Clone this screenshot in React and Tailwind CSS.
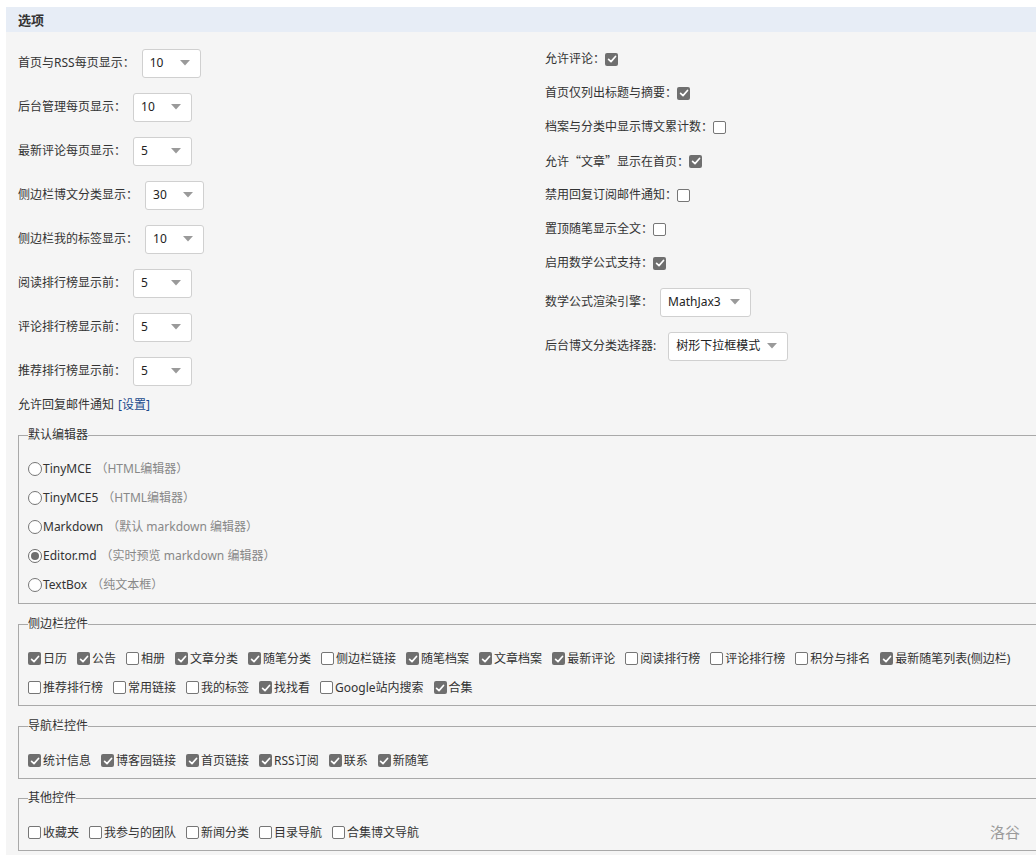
import React from 'react';

const leftSelects = [
  { label: '首页与RSS每页显示：', value: '10' },
  { label: '后台管理每页显示：', value: '10' },
  { label: '最新评论每页显示：', value: '5' },
  { label: '侧边栏博文分类显示：', value: '30' },
  { label: '侧边栏我的标签显示：', value: '10' },
  { label: '阅读排行榜显示前：', value: '5' },
  { label: '评论排行榜显示前：', value: '5' },
  { label: '推荐排行榜显示前：', value: '5' },
];

const rightChecks = [
  { key: 'a', label: '允许评论：', on: true },
  { key: 'b', label: '首页仅列出标题与摘要：', on: true },
  { key: 'c', label: '档案与分类中显示博文累计数：', on: false },
  {
    key: 'd',
    label: (
      <>
        允许<span className="font-['Noto_Sans_CJK_SC',sans-serif]">“文章”</span>显示在首页：
      </>
    ),
    on: true,
  },
  { key: 'e', label: '禁用回复订阅邮件通知：', on: false },
  { key: 'f', label: '置顶随笔显示全文：', on: false },
  { key: 'g', label: '启用数学公式支持：', on: true },
];

const editors = [
  { name: 'TinyMCE', note: '（HTML编辑器）' },
  { name: 'TinyMCE5', note: '（HTML编辑器）' },
  { name: 'Markdown', note: '（默认 markdown 编辑器）' },
  { name: 'Editor.md', note: '（实时预览 markdown 编辑器）', on: true },
  { name: 'TextBox', note: '（纯文本框）' },
];

const sidebarRows = [
  [
    ['日历', 1], ['公告', 1], ['相册', 0], ['文章分类', 1], ['随笔分类', 1], ['侧边栏链接', 0],
    ['随笔档案', 1], ['文章档案', 1], ['最新评论', 1], ['阅读排行榜', 0], ['评论排行榜', 0],
    ['积分与排名', 0], ['最新随笔列表(侧边栏)', 1],
  ],
  [['推荐排行榜', 0], ['常用链接', 0], ['我的标签', 0], ['找找看', 1], ['Google站内搜索', 0], ['合集', 1]],
];

const navItems = [['统计信息', 1], ['博客园链接', 1], ['首页链接', 1], ['RSS订阅', 1], ['联系', 1], ['新随笔', 1]];
const otherItems = [['收藏夹', 0], ['我参与的团队', 0], ['新闻分类', 0], ['目录导航', 0], ['合集博文导航', 0]];

function Box({ on }) {
  if (on) {
    return (
      <span className="inline-flex h-[13px] w-[13px] shrink-0 items-center justify-center rounded-[2px] bg-[#6f6f6f]">
        <svg viewBox="0 0 10 10" className="h-[10px] w-[10px]">
          <path d="M1.6 5.3 L4 7.6 L8.5 2.5" stroke="#fff" strokeWidth="1.7" fill="none" strokeLinecap="round" strokeLinejoin="round" />
        </svg>
      </span>
    );
  }
  return <span className="inline-block h-[13px] w-[13px] shrink-0 rounded-[2px] border border-[#767676] bg-white" />;
}

function Radio({ on }) {
  return (
    <span className={`inline-flex h-[14px] w-[14px] shrink-0 items-center justify-center rounded-full border bg-white ${on ? 'border-[#6f6f6f]' : 'border-[#767676]'}`}>
      {on && <span className="h-[8px] w-[8px] rounded-full bg-[#6f6f6f]" />}
    </span>
  );
}

function Select({ value, width }) {
  return (
    <div className={`flex h-[29px] items-center justify-between rounded-[3px] border border-[#d0d0d0] bg-white pl-[7px] pr-[10px] text-[#222] ${width}`}>
      <span>{value}</span>
      <svg viewBox="0 0 10 6" className="h-[6px] w-[10px]">
        <polygon points="0,0 10,0 5,5.5" fill="#9a9a9a" />
      </svg>
    </div>
  );
}

function CheckRow({ items }) {
  return (
    <div className="flex h-[29px] items-center gap-x-[10px]">
      {items.map(([label, on]) => (
        <label key={label} className="flex items-center whitespace-nowrap">
          <Box on={on} />
          <span className="ml-[2px]">{label}</span>
        </label>
      ))}
    </div>
  );
}

function Group({ title, children, className = '' }) {
  return (
    <fieldset className={`border border-[#a9a9a9] px-[9px] ${className}`}>
      <legend className="leading-[16px]">{title}</legend>
      {children}
    </fieldset>
  );
}

export default function App() {
  return (
    <div className="relative min-h-[855px] w-full overflow-hidden bg-white pl-[6px] pt-[7px] font-['Noto_Sans','Noto_Sans_CJK_SC',sans-serif] text-[12px] leading-[16px] text-[#333]">
      <div className="min-h-[848px] w-[1100px] bg-[#f5f5f5]">
        <div className="flex h-[25px] items-center bg-[#e7edf6] px-3 text-[13px] font-bold text-[#333]">选项</div>

        <div className="px-3 pt-[9px]">
          <div className="flex items-start">
            <div className="w-[527px]">
              {leftSelects.map((s) => (
                <div key={s.label} className="flex h-[44px] items-center">
                  <span>{s.label}</span>
                  <div className="ml-[7px]">
                    <Select value={s.value} width="w-[59px]" />
                  </div>
                </div>
              ))}
              <div className="flex h-[24px] items-center">
                允许回复邮件通知 <a className="ml-1 text-[#1a4b8c]">[设置]</a>
              </div>
            </div>

            <div className="pt-px">
              {rightChecks.map((c) => (
                <div key={c.key} className="flex h-[34px] items-center">
                  <span>{c.label}</span>
                  <Box on={c.on} />
                </div>
              ))}
              <div className="flex h-[44px] items-center">
                <span>数学公式渲染引擎：</span>
                <div className="ml-[7px]">
                  <Select value="MathJax3" width="w-[91px]" />
                </div>
              </div>
              <div className="flex h-[44px] items-center">
                <span>后台博文分类选择器:</span>
                <div className="ml-[12px]">
                  <Select value="树形下拉框模式" width="w-[120px]" />
                </div>
              </div>
            </div>
          </div>

          <Group title="默认编辑器" className="mt-[10px] pt-[11px] pb-[4px]">
            {editors.map((e) => (
              <label key={e.name} className="flex h-[29px] items-center">
                <Radio on={e.on} />
                <span className="ml-[1px]">{e.name}</span>
                <span className="ml-1 text-[#888]">{e.note}</span>
              </label>
            ))}
          </Group>

          <Group title="侧边栏控件" className="mt-[12px] pt-[12px] pb-[3px]">
            {sidebarRows.map((row, i) => (
              <CheckRow key={i} items={row} />
            ))}
          </Group>

          <Group title="导航栏控件" className="mt-[12px] pt-[12px] pb-[3px]">
            <CheckRow items={navItems} />
          </Group>

          <Group title="其他控件" className="mt-[11px] pt-[12px] pb-[3px]">
            <CheckRow items={otherItems} />
          </Group>
        </div>
      </div>

      <span className="absolute left-[990px] top-[823px] text-[15px] leading-[18px] text-[#9a9a9a]">洛谷</span>
    </div>
  );
}
